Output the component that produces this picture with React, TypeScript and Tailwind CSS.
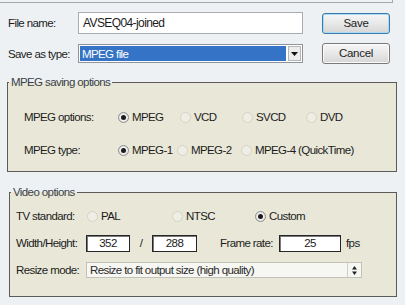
function Radio({ checked, label, className = '' }: { checked?: boolean; label: string; className?: string }) {
  return (
    <div className={`flex items-center shrink-0 ${className}`}>
      {checked ? (
        <span className="w-[11px] h-[11px] rounded-full border border-[#8e8e8e] bg-[radial-gradient(circle,#ffffff_30%,#c9c9c9_100%)] flex items-center justify-center shrink-0">
          <span className="w-[5px] h-[5px] rounded-full bg-[#1b1b1b]" />
        </span>
      ) : (
        <span className="w-[11px] h-[11px] rounded-full border border-[#d3d3c6] bg-[#efeee4] shrink-0" />
      )}
      <span className="ml-[3px]">{label}</span>
    </div>
  );
}

function Btn({ children, focused }: { children: string; focused?: boolean }) {
  return (
    <button
      className={`w-[68px] h-[21px] rounded-[3px] border text-center leading-[19px] tracking-[-0.3px] bg-gradient-to-b from-[#f6f6f6] via-[#e8e8e8] to-[#d6d6d6] ${
        focused ? 'border-[#3d7aab] shadow-[inset_0_0_0_1px_#a9dcf2]' : 'border-[#7a7a7a] shadow-[inset_0_0_0_1px_#fbfbfb]'
      }`}
    >
      {children}
    </button>
  );
}

export default function App() {
  return (
    <div className="w-[405px] h-[305px] overflow-hidden whitespace-nowrap bg-[#eef1f4] text-[11.5px] leading-[14px] tracking-[-0.6px] text-[#1c1c1c] font-['Liberation_Sans',Arial,sans-serif]">
      {/* edge of the box above */}
      <div className="h-[3px] w-[393px] border-b border-r border-[#a3a8ad]" />

      {/* File name / type */}
      <div className="pl-[8px] pt-[9px]">
        <div className="flex items-center h-[22px]">
          <span className="w-[70px] shrink-0">File name:</span>
          <div className="w-[225px] h-[22px] border border-[#a9acb2] bg-white flex items-center pl-[4px] text-[12px]">
            AVSEQ04-joined
          </div>
          <div className="ml-[19px]">
            <Btn focused>Save</Btn>
          </div>
        </div>
        <div className="flex items-center h-[21px] mt-[9px]">
          <span className="w-[70px] shrink-0">Save as type:</span>
          <div className="w-[225px] h-[19px] border border-[#8f949a] bg-white flex items-center p-[1px]">
            <div className="flex-1 h-full bg-[#3473c6] text-white flex items-center pl-[2px]">MPEG file</div>
            <div className="w-[13px] h-full ml-[2px] border border-[#b6b6b6] bg-[#ececec] flex items-center justify-center">
              <svg width="7" height="4" viewBox="0 0 7 4">
                <path d="M0 0h7L3.5 4z" fill="#111" />
              </svg>
            </div>
          </div>
          <div className="ml-[19px]">
            <Btn>Cancel</Btn>
          </div>
        </div>
      </div>

      {/* MPEG saving options */}
      <fieldset className="ml-[7px] mt-[11px] w-[390px] border border-[#5b5b58] bg-[#e9e8d8] pb-[11px]">
        <legend className="ml-[1px] px-[2px] text-[#3a3f48]">MPEG saving options</legend>
        <div className="pl-[16px]">
          <div className="flex items-center h-[20px] mt-[18px]">
            <span className="w-[94px] shrink-0">MPEG options:</span>
            <Radio checked label="MPEG" className="w-[62px]" />
            <Radio label="VCD" className="w-[62px]" />
            <Radio label="SVCD" className="w-[64px]" />
            <Radio label="DVD" />
          </div>
          <div className="flex items-center h-[20px] mt-[13px]">
            <span className="w-[94px] shrink-0">MPEG type:</span>
            <Radio checked label="MPEG-1" className="w-[59px]" />
            <Radio label="MPEG-2" className="w-[64px]" />
            <Radio label="MPEG-4 (QuickTime)" />
          </div>
        </div>
      </fieldset>

      {/* Video options */}
      <fieldset className="ml-[9px] mt-[13px] w-[388px] border border-[#5b5b58] bg-[#e9e8d8] pb-[16px]">
        <legend className="ml-[1px] px-[2px] text-[#3a3f48]">Video options</legend>
        <div className="pl-[6px]">
          <div className="flex items-center h-[20px] mt-[7px]">
            <span className="w-[71px] shrink-0">TV standard:</span>
            <Radio label="PAL" className="w-[85px]" />
            <Radio label="NTSC" className="w-[83px]" />
            <Radio checked label="Custom" />
          </div>
          <div className="flex items-center h-[20px] mt-[7px]">
            <span className="w-[70px] shrink-0">Width/Height:</span>
            <div className="w-[44px] h-[17px] shrink-0 border border-[#262626] shadow-[inset_1px_1px_0_#7a7a7a] bg-white text-center leading-[15px]">352</div>
            <span className="w-[22px] shrink-0 text-center">/</span>
            <div className="w-[45px] h-[17px] shrink-0 border border-[#262626] shadow-[inset_1px_1px_0_#7a7a7a] bg-white text-center leading-[15px]">288</div>
            <span className="ml-[23px] w-[59px] shrink-0">Frame rate:</span>
            <div className="w-[62px] h-[17px] shrink-0 border border-[#262626] shadow-[inset_1px_1px_0_#7a7a7a] bg-white text-center leading-[15px]">25</div>
            <span className="ml-[5px]">fps</span>
          </div>
          <div className="flex items-center h-[20px] mt-[7px]">
            <span className="w-[70px] shrink-0">Resize mode:</span>
            <div className="w-[276px] h-[16px] shrink-0 border border-[#c2c2b8] bg-[#f6f6f2] flex items-center">
              <span className="flex-1 pl-[3px] text-[#2a2a2a]">Resize to fit output size (high quality)</span>
              <div className="w-[14px] h-full border-l border-[#d0d0c8] flex items-center justify-center">
                <svg width="5" height="9" viewBox="0 0 5 9">
                  <path d="M2.5 0L5 3.5H0z M2.5 9L0 5.5h5z" fill="#222" />
                </svg>
              </div>
            </div>
          </div>
        </div>
      </fieldset>
    </div>
  );
}
